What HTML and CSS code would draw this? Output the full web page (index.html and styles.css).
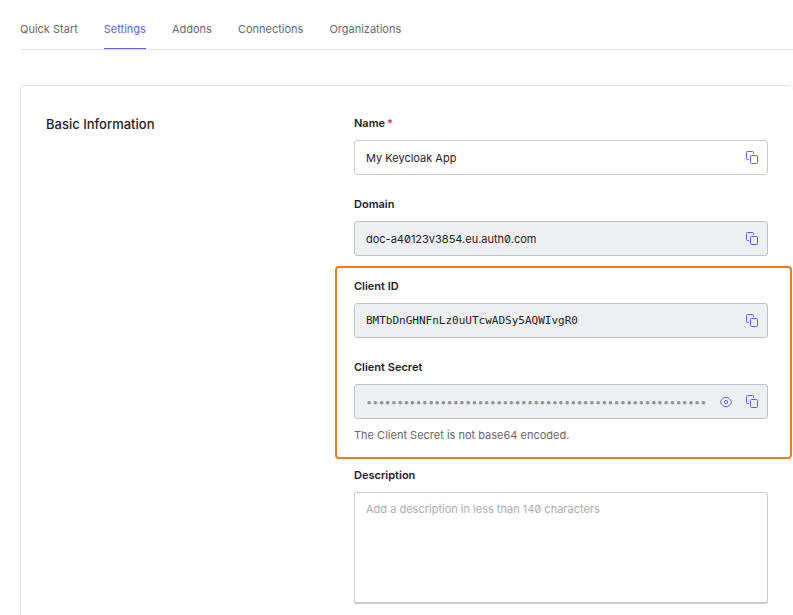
FILE: index.html
```
<!DOCTYPE html>
<html lang="en">
<head>
  <meta charset="UTF-8">
  <meta name="viewport" content="width=device-width, initial-scale=1">
  <title>Application Settings</title>
  <link rel="stylesheet" href="styles.css">
</head>
<body>

  <!-- Icons -->
  <svg class="sprite" aria-hidden="true">
    <symbol id="icon-copy" viewBox="0 0 14 14">
      <path d="M4 8.5H2.5a1 1 0 0 1-1-1v-6a1 1 0 0 1 1-1h5a1 1 0 0 1 1 1V3"/>
      <rect x="5.5" y="4.5" width="7" height="8" rx="1"/>
    </symbol>
    <symbol id="icon-eye" viewBox="0 0 14 14">
      <path d="M1.5 7C2.6 3.9 4.6 2.3 7 2.3S11.4 3.9 12.5 7C11.4 10.1 9.4 11.7 7 11.7S2.6 10.1 1.5 7z"/>
      <circle cx="7" cy="7" r="1.6"/>
    </symbol>
  </svg>

  <nav class="tabs">
    <a href="#quick-start">Quick Start</a>
    <a href="#settings" class="active">Settings</a>
    <a href="#addons">Addons</a>
    <a href="#connections">Connections</a>
    <a href="#organizations">Organizations</a>
  </nav>

  <main class="card">
    <h2 class="card-title">Basic Information</h2>

    <form class="fields">
      <div class="field">
        <label for="name">Name<span class="required">*</span></label>
        <div class="control">
          <input type="text" id="name" value="My Keycloak App">
          <button type="button" class="icon-btn" aria-label="Copy name"><svg><use href="#icon-copy"/></svg></button>
        </div>
      </div>

      <div class="field">
        <label for="domain">Domain</label>
        <div class="control readonly">
          <input type="text" id="domain" value="doc-a40123v3854.eu.auth0.com" readonly>
          <button type="button" class="icon-btn" aria-label="Copy domain"><svg><use href="#icon-copy"/></svg></button>
        </div>
      </div>

      <!-- Client credentials -->
      <div class="highlight">
        <div class="field">
          <label for="clientId">Client ID</label>
          <div class="control readonly">
            <input type="text" id="clientId" class="mono" value="BMTbDnGHNFnLz0uUTcwADSy5AQWIvgR0" readonly>
            <button type="button" class="icon-btn" aria-label="Copy client ID"><svg><use href="#icon-copy"/></svg></button>
          </div>
        </div>

        <div class="field">
          <label for="clientSecret">Client Secret</label>
          <div class="control readonly">
            <input type="text" id="clientSecret" class="secret" placeholder="•••••••••••••••••••••••••••••••••••••••••••••••••••••••" readonly>
            <button type="button" class="icon-btn" aria-label="Show client secret"><svg><use href="#icon-eye"/></svg></button>
            <button type="button" class="icon-btn" aria-label="Copy client secret"><svg><use href="#icon-copy"/></svg></button>
          </div>
          <p class="hint">The Client Secret is not base64 encoded.</p>
        </div>
      </div>

      <div class="field">
        <label for="description">Description</label>
        <textarea id="description" placeholder="Add a description in less than 140 characters"></textarea>
      </div>
    </form>
  </main>

</body>
</html>
```

FILE: styles.css
```
* {
  box-sizing: border-box;
}

body {
  display: flex;
  flex-direction: column;
  min-height: 100vh;
  margin: 0;
  padding-left: 20px;
  background: #fff;
  color: #1e212a;
  font-family: Inter, "Liberation Sans", sans-serif;
  font-size: 11px;
  font-feature-settings: "zero";
}

.sprite {
  display: none;
}

.tabs {
  display: flex;
  gap: 26px;
  padding-top: 20px;
  border-bottom: 1px solid #e0e1e3;
}

.tabs a {
  padding-bottom: 10px;
  border-bottom: 1px solid transparent;
  color: #65676e;
  line-height: 18px;
  text-decoration: none;
}

.tabs .active {
  border-color: #635dff;
  color: #635dff;
}

.card {
  flex: 1;
  display: grid;
  grid-template-columns: 308px 1fr;
  margin-top: 35px;
  padding: 29px 25px 12px;
  border: solid #e3e4e6;
  border-width: 1px 0 0 1px;
  border-radius: 5px 5px 0 0;
}

.card-title {
  margin: 0;
  font-size: 13px;
  font-weight: 500;
  line-height: 18px;
}

.fields {
  display: flex;
  flex-direction: column;
  gap: 21px;
}

.field label {
  display: block;
  margin-bottom: 9px;
  font-weight: 600;
  line-height: 16px;
}

.required {
  margin-left: 2px;
  color: #d03c38;
}

.control {
  display: flex;
  align-items: center;
  gap: 12px;
  height: 35px;
  padding: 0 8px 0 11px;
  border: 1px solid #c9cace;
  border-radius: 3px;
}

.readonly {
  border-color: #bfc0c4;
  background: #eeeff1;
}

.control input {
  flex: 1;
  min-width: 0;
  padding: 0;
  border: none;
  outline: none;
  background: none;
  color: inherit;
  font: inherit;
  font-feature-settings: inherit;
}

.control .mono {
  font-family: "DejaVu Sans Mono", "Liberation Mono", monospace;
}

.secret::placeholder {
  color: #929397;
}

.icon-btn {
  display: flex;
  padding: 0;
  border: none;
  background: none;
  color: #635dff;
  cursor: pointer;
}

.icon-btn svg {
  width: 14px;
  height: 14px;
  fill: none;
  stroke: currentColor;
}

.highlight {
  display: flex;
  flex-direction: column;
  gap: 21px;
  margin: -11px -24px -13px -19px;
  padding: 10px 22px 14px 17px;
  border: 2px solid #e97f16;
  border-radius: 4px;
}

.hint {
  margin: 8px 0 0;
  color: #65676e;
  line-height: 16px;
}

textarea {
  display: block;
  width: 100%;
  height: 112px;
  padding: 9px 11px;
  border: 1px solid #c9cace;
  border-bottom-width: 2px;
  border-radius: 3px;
  outline: none;
  resize: none;
  font: inherit;
  font-feature-settings: inherit;
}

textarea::placeholder {
  color: #a9abaf;
}
```
